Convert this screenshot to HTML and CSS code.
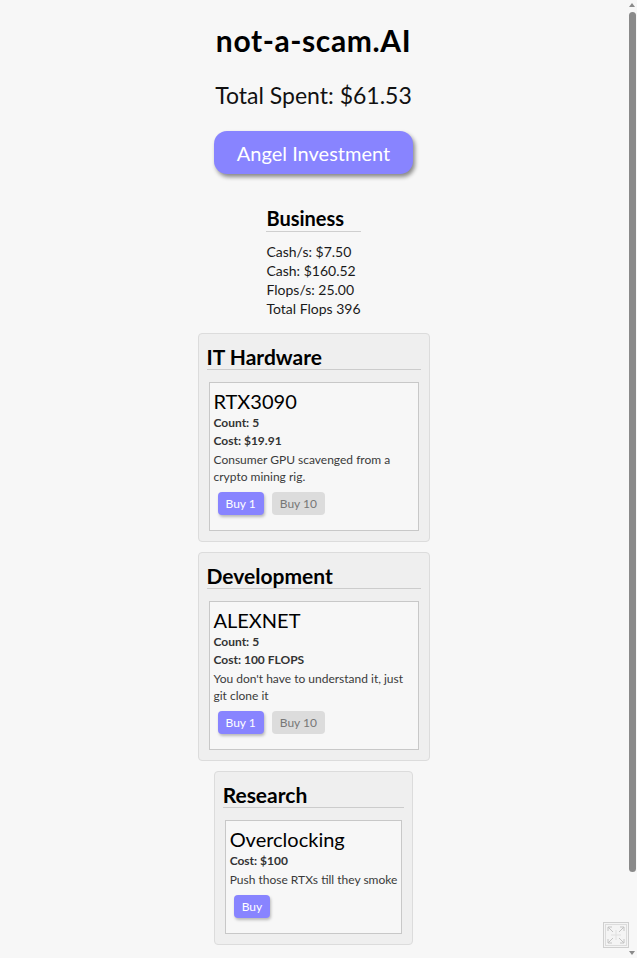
FILE: index.html
```html
<!DOCTYPE html>
<html lang="en">
<head>
<meta charset="utf-8">
<title>not-a-scam.AI</title>
<link rel="stylesheet" href="styles.css">
</head>
<body>
<main class="app">
  <h1 class="title">not-a-scam.AI</h1>
  <div class="spent">Total Spent: $61.53</div>
  <button class="angel">Angel Investment</button>

  <section class="business">
    <h3 class="business-title">Business</h3>
    <div class="stats">
      <div>Cash/s: $7.50</div>
      <div>Cash: $160.52</div>
      <div>Flops/s: 25.00</div>
      <div>Total Flops 396</div>
    </div>
  </section>

  <section class="panel">
    <h2 class="panel-title">IT Hardware</h2>
    <div class="card">
      <div class="name">RTX3090</div>
      <div class="meta">Count: 5</div>
      <div class="meta">Cost: $19.91</div>
      <p class="desc">Consumer GPU scavenged from a crypto mining rig.</p>
      <div class="btns">
        <button class="btn primary">Buy 1</button>
        <button class="btn disabled">Buy 10</button>
      </div>
    </div>
  </section>

  <section class="panel">
    <h2 class="panel-title">Development</h2>
    <div class="card">
      <div class="name">ALEXNET</div>
      <div class="meta">Count: 5</div>
      <div class="meta">Cost: 100 FLOPS</div>
      <p class="desc">You don't have to understand it, just git clone it</p>
      <div class="btns">
        <button class="btn primary">Buy 1</button>
        <button class="btn disabled">Buy 10</button>
      </div>
    </div>
  </section>

  <section class="panel">
    <h2 class="panel-title">Research</h2>
    <div class="card">
      <div class="name">Overclocking</div>
      <div class="meta">Cost: $100</div>
      <p class="desc">Push those RTXs till they smoke</p>
      <div class="btns">
        <button class="btn primary">Buy</button>
      </div>
    </div>
  </section>
</main>

<div class="scrollbar" aria-hidden="true">
  <span class="arrow up"></span>
  <span class="thumb"></span>
  <span class="arrow down"></span>
</div>
<div class="corner-widget" aria-hidden="true">
  <svg width="26" height="26" viewBox="0 0 26 26">
    <rect x="0.5" y="0.5" width="25" height="25" fill="#f4f4f4" stroke="#cfcfcf"/>
    <rect x="2.5" y="2.5" width="21" height="21" fill="none" stroke="#dcdcdc"/>
    <g fill="none" stroke="#c4c4c4" stroke-width="1">
      <path d="M5 5 L10 10 M5 5 h4 M5 5 v4"/>
      <path d="M21 5 L16 10 M21 5 h-4 M21 5 v4"/>
      <path d="M5 21 L10 16 M5 21 h4 M5 21 v-4"/>
      <path d="M21 21 L16 16 M21 21 h-4 M21 21 v-4"/>
      <path d="M8 13 h10 M13 8 v10" stroke="#e0e0e0"/>
    </g>
  </svg>
</div>
</body>
</html>
```

FILE: styles.css
```css
html, body {
  margin: 0;
  padding: 0;
  overflow: hidden;
  background: #f7f7f7;
}

body {
  font-family: "Lato", "Open Sans", "Liberation Sans", sans-serif;
  color: #111;
}

.app {
  width: 627px;
  display: flex;
  flex-direction: column;
  align-items: center;
  padding-top: 23px;
  box-sizing: border-box;
}

.title {
  margin: 0;
  font-size: 30px;
  line-height: 34px;
  font-weight: 700;
  letter-spacing: 0.6px;
  color: #000;
}

.spent {
  margin-top: 23px;
  font-size: 23px;
  line-height: 30px;
  color: #111;
}

.angel {
  margin-top: 21px;
  font-family: inherit;
  font-size: 20px;
  line-height: 23px;
  padding: 11px 22px 9px;
  width: 199px;
  border: none;
  border-radius: 13px;
  background: #8884ff;
  color: #fff;
  box-shadow: 2px 3px 4px rgba(0, 0, 0, 0.45);
}

.business {
  margin-top: 33px;
  display: flex;
  flex-direction: column;
}

.business-title {
  margin: 0;
  font-size: 20px;
  line-height: 22px;
  font-weight: 700;
  padding-bottom: 2px;
  border-bottom: 1px solid #cfcfcf;
  color: #000;
}

.stats {
  margin-top: 10px;
  font-size: 14px;
  line-height: 19px;
  color: #1a1a1a;
}

.panel {
  margin-top: 15px;
  background: #efefef;
  border: 1px solid #dcdcdc;
  border-radius: 4px;
  padding: 10px 8px 10px;
}

.panel + .panel {
  margin-top: 10px;
}

.panel-title {
  margin: 0;
  font-size: 21px;
  line-height: 25px;
  font-weight: 700;
  border-bottom: 1px solid #cccccc;
  color: #000;
}

.card {
  margin: 12px 2px 0;
  max-width: 210px;
  box-sizing: border-box;
  border: 1px solid #c8c8c8;
  background: #f7f7f7;
  padding: 6px 4px 15px;
}

.name {
  font-size: 20px;
  line-height: 24px;
  color: #000;
}

.meta {
  margin-top: 2px;
  font-size: 12px;
  line-height: 16px;
  font-weight: 700;
  color: #333;
}

.desc {
  margin: 2px 0 0;
  font-size: 12px;
  line-height: 17px;
  color: #3a3a3a;
}

.btns {
  margin-top: 7px;
  margin-left: 4px;
  display: flex;
  gap: 8px;
}

.btn {
  font-family: inherit;
  font-size: 12px;
  line-height: 15px;
  padding: 4px 8px;
  border: none;
  border-radius: 4px;
}

.btn.primary {
  background: #8884ff;
  color: #fff;
  box-shadow: 1px 2px 3px rgba(0, 0, 0, 0.25);
}

.btn.disabled {
  background: #dcdcdc;
  color: #777;
}

.scrollbar {
  position: fixed;
  top: 0;
  right: 0;
  width: 10px;
  height: 100%;
  background: #f7f7f7;
}

.thumb {
  position: absolute;
  left: 2px;
  top: 12px;
  width: 7px;
  height: 860px;
  border-radius: 4px;
  background: #8a8a8a;
}

.arrow {
  position: absolute;
  left: 2px;
  width: 0;
  height: 0;
  border-left: 3.5px solid transparent;
  border-right: 3.5px solid transparent;
}

.arrow.up {
  top: 3px;
  border-bottom: 4px solid #8a8a8a;
}

.arrow.down {
  bottom: 3px;
  border-top: 4px solid #8a8a8a;
}

.corner-widget {
  position: fixed;
  left: 603px;
  top: 922px;
  width: 26px;
  height: 26px;
}
```
